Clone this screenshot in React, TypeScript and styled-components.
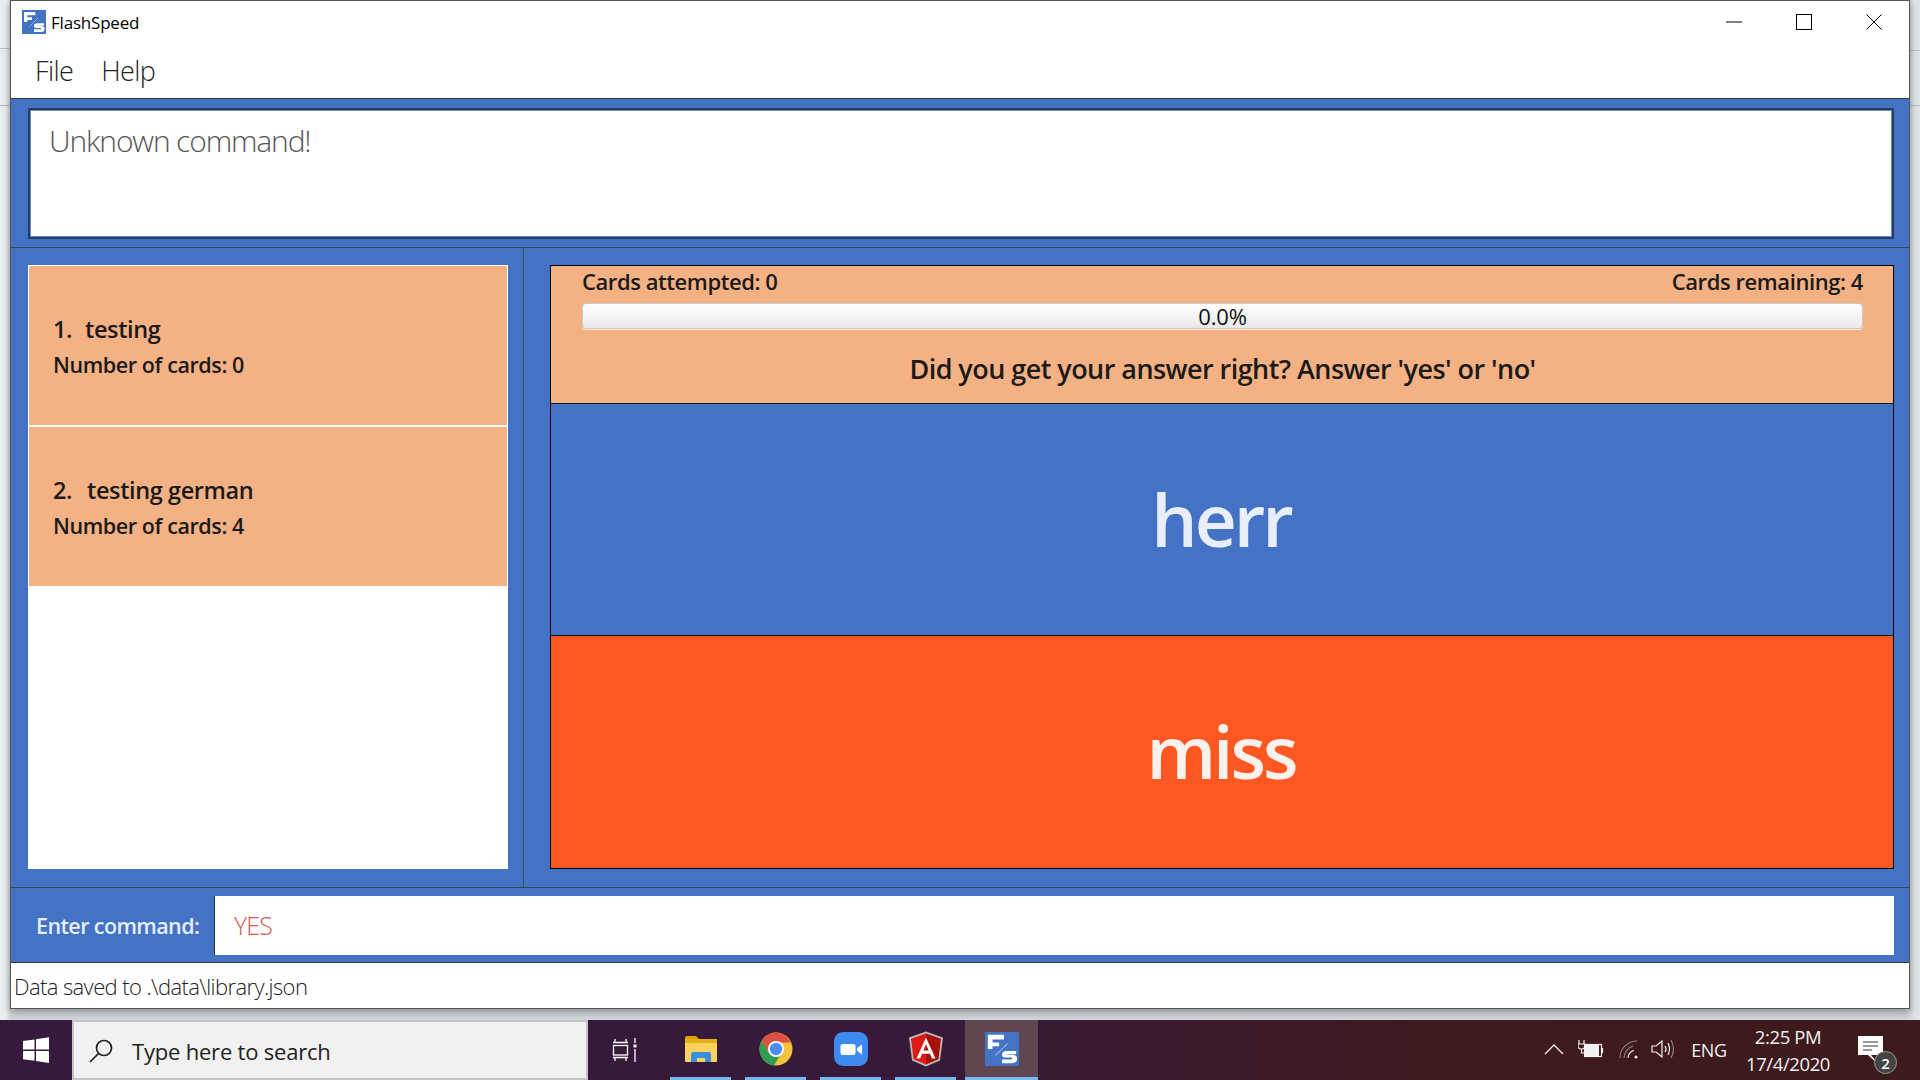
import React from "react";
import styled, { createGlobalStyle } from "styled-components";

const Global = createGlobalStyle`
  html, body { margin: 0; padding: 0; width: 1920px; height: 1080px; overflow: hidden; }
  * { box-sizing: border-box; }
  body { font-family: "Open Sans", "Noto Sans", sans-serif; }
`;

const Page = styled.div`
  width: 1920px; height: 1080px;
  display: flex; flex-direction: column;
`;
const Desktop = styled.div`
  height: 1020px; padding: 0 10px 11px 10px;
  background:
    linear-gradient(#b9bcc0, #b9bcc0) 0 105px / 100% 1px no-repeat,
    linear-gradient(#b9bcc0, #b9bcc0) 0 48px / 10px 1px no-repeat,
    linear-gradient(#b9bcc0, #b9bcc0) 1910px 50px / 10px 1px no-repeat,
    linear-gradient(90deg, #eceef0 0 6px, #d3d8de 10px, #d3d8de 1910px, #e0e3e7 1914px);
`;
const Win = styled.div`
  height: 100%;
  display: flex; flex-direction: column;
  background: #fff;
  border: 1px solid #555;
  box-shadow: 0 3px 8px rgba(0,0,0,.35);
`;
const TitleBar = styled.div`
  height: 42px; display: flex; align-items: center; padding: 0 0 0 11px; gap: 5px;
  font-size: 17px; color: #000; letter-spacing: -0.2px;
`;
const TitleText = styled.span` flex: 1; `;
const WinButtons = styled.div` display: flex; align-items: center; `;
const WinButton = styled.div`
  width: 70px; height: 42px; display: flex; align-items: center; justify-content: center;
`;
const MenuBar = styled.div`
  height: 56px; display: flex; align-items: center; padding: 0 0 0 24px; gap: 28px;
  font-size: 27px; font-weight: 300; color: #222; letter-spacing: -0.6px;
  border-bottom: 1px solid #333;
`;
const ResultPane = styled.div`
  height: 149px; background: #4472c4; padding: 9px 15px 8px 17px;
  border-bottom: 1px solid #3a3f4a;
`;
const ResultBox = styled.div`
  height: 100%; background: #fff; border: 2px solid #2c3a5c;
  box-shadow: inset 0 0 0 1px #5f8ad8;
  padding: 10px 19px; font-size: 30px; font-weight: 300; color: #555; letter-spacing: -1.15px; line-height: 42px;
`;
const Main = styled.div`
  height: 640px; background: #4472c4; display: flex; border-bottom: 1px solid #3a3f4a;
`;
const ListCol = styled.div`
  width: 513px; padding: 17px 15px 18px 17px; border-right: 1px solid #3f4e70; flex: none;
`;
const ListBox = styled.div`
  height: 100%; background: #fff; padding: 1px; display: flex; flex-direction: column; gap: 2px;
`;
const Card = styled.div`
  height: 159px; background: #f4b183; padding-left: 24px; display: flex; flex-direction: column; justify-content: center; gap: 6px;
  color: #1a1a1a;
`;
const CardTitle = styled.div<{ $gap: number }>`
  font-size: 23.5px; font-weight: 600; letter-spacing: -0.4px; display: flex; gap: ${p => p.$gap}px; line-height: 32px;
`;
const CardSub = styled.div`
  font-size: 21.5px; font-weight: 600; letter-spacing: -0.4px; line-height: 28px;
`;
const StudyCol = styled.div`
  flex: 1; padding: 17px 15px 18px 26px; display: flex;
`;
const StudyBox = styled.div`
  flex: 1; display: flex; flex-direction: column; border: 1px solid #000;
`;
const Progress = styled.div`
  height: 137px; background: #f4b183; padding: 0 30px 0 31px; color: #1a1a1a; display: flex; flex-direction: column;
`;
const Counts = styled.div`
  display: flex; justify-content: space-between; font-size: 22px; font-weight: 600; letter-spacing: -0.43px; line-height: 30px; height: 37px;
`;
const Bar = styled.div`
  height: 26px; border: 1px solid #c9c9c9; border-radius: 4px;
  background: linear-gradient(#fff, #f2f2f2 60%, #e8e8e8);
  box-shadow: 0 1px 0 #ffe9d8;
  display: flex; align-items: center; justify-content: center; flex: none;
  font-size: 22px; font-weight: 400; color: #111; letter-spacing: -0.2px;
`;
const Prompt = styled.div`
  flex: 1; display: flex; align-items: center; justify-content: center;
  font-size: 27px; font-weight: 600; letter-spacing: -0.55px; padding-top: 5px;
`;
const Face = styled.div<{ $bg: string; $color: string; $h: number }>`
  height: ${p => p.$h}px; background: ${p => p.$bg}; color: ${p => p.$color};
  display: flex; align-items: center; justify-content: center;
  font-size: 73px; font-weight: 600; letter-spacing: -3px; padding: 0 2px 3px 0;
  border-top: 1px solid #111;
`;
const CommandRow = styled.div`
  height: 75px; background: #4472c4; display: flex; align-items: center; padding: 0 15px 0 25px;
  border-bottom: 1px solid #333;
`;
const CommandLabel = styled.div`
  width: 178px; font-size: 21.5px; font-weight: 600; color: #e6eeff; letter-spacing: -0.6px;
`;
const CommandInput = styled.div`
  flex: 1; height: 59px; background: #fff; border-left: 1px solid #333; display: flex; align-items: center; padding: 0 19px;
  font-size: 25px; font-weight: 300; color: #d8584c; letter-spacing: -0.9px;
`;
const StatusBar = styled.div`
  flex: 1; display: flex; align-items: center; padding-left: 3px;
  font-size: 22px; font-weight: 300; color: #222; letter-spacing: -0.6px;
`;

const Taskbar = styled.div`
  height: 60px; display: flex;
  background: linear-gradient(90deg, #351a3e 0%, #371a38 50%, #3f1a1e 75%, #3d1a1c 100%);
`;
const StartBtn = styled.div` width: 72px; display: flex; align-items: center; justify-content: center; `;
const SearchBox = styled.div`
  width: 516px; background: #f1f1f1; border: 2px solid #c4c4c8;
  display: flex; align-items: center; padding: 2px 0 0 14px; gap: 18px;
  font-size: 22px; color: #222; letter-spacing: -0.2px;
`;
const TaskView = styled.div` width: 73px; display: flex; align-items: center; justify-content: center; `;
const Tasks = styled.div` display: flex; margin-left: 2px; `;
const TaskBtn = styled.div<{ $active?: boolean }>`
  width: ${p => p.$active ? 73 : 75}px; margin-left: ${p => p.$active ? 2 : 0}px;
  display: flex; flex-direction: column; align-items: center;
  background: ${p => p.$active ? "#5f4650" : "transparent"};
`;
const TaskIcon = styled.div` flex: 1; display: flex; align-items: center; justify-content: center; padding-top: 1px; `;
const Underline = styled.div<{ $active?: boolean }>`
  height: 3px; width: ${p => p.$active ? "100%" : "61px"}; background: #76b9ed;
`;
const Tray = styled.div`
  margin-left: auto; display: flex; align-items: center; color: #f2f2f2; padding-right: 23px;
`;
const TrayIcon = styled.div<{ $w: number }>`
  width: ${p => p.$w}px; display: flex; align-items: center; justify-content: center; margin-top: -2px;
`;
const Lang = styled.div` font-size: 18px; width: 62px; text-align: center; letter-spacing: -0.3px; `;
const Clock = styled.div`
  width: 92px; font-size: 18.5px; text-align: center; line-height: 27px; letter-spacing: -0.4px; margin-left: 2px;
`;
const Notify = styled.div`
  position: relative; width: 44px; margin-left: 19px; height: 60px; display: flex; align-items: center; justify-content: center; padding-right: 10px;
`;
const Badge = styled.div`
  position: absolute; right: 0; bottom: 6px; width: 23px; height: 23px; border-radius: 50%;
  background: #444; border: 1px solid #999; color: #fff; font-size: 15px; font-weight: 600;
  display: flex; align-items: center; justify-content: center;
`;

const FsLogo = ({ size }: { size: number }) => (
  <svg width={size} height={size} viewBox="0 0 36 36">
    <rect width="36" height="36" fill="#4472c4" />
    <path d="M3 3H20V8H8V11H15V15H8V18H3Z" fill="#fff" />
    <path d="M11 25 24 12" stroke="#9db8e8" strokeWidth="1.2" />
    <path d="M33 20H23Q18 20 18 24Q18 27 23 27H27Q29 27 29 28Q29 29 27 29H18V33H28Q34 33 34 28Q34 24 28 24H24Q23 24 23 23.5H33Z" fill="#fff" />
  </svg>
);

const WinLogo = () => (
  <svg width="26" height="26" viewBox="0 0 26 26" fill="#fff">
    <path d="M0 4 11.5 2.4V12.4H0zM13 2.2 26 .3V12.4H13zM0 14H11.5V23.8L0 22.2zM13 14H26V26L13 24z" />
  </svg>
);
const SearchIcon = () => (
  <svg width="26" height="26" viewBox="0 0 26 26" fill="none" stroke="#222" strokeWidth="1.7">
    <circle cx="16" cy="10" r="7.5" />
    <path d="M10.5 15.5 2 24" />
  </svg>
);
const TaskViewIcon = () => (
  <svg width="26" height="24" viewBox="0 0 26 24" fill="none" stroke="#fff" strokeWidth="1.3">
    <path d="M1 4.5h15M3 1v3.5M14 1v3.5M1 19.5h15M3 19.5V23M14 19.5V23" />
    <rect x="1.5" y="7.5" width="14" height="9.5" />
    <path d="M23 0v5M23 11v13" />
    <rect x="21.5" y="6.5" width="3" height="3" fill="#fff" stroke="none" />
  </svg>
);
const FolderIcon = () => (
  <svg width="34" height="28" viewBox="0 0 34 28">
    <path d="M1 3q0-2 2-2h9l3 3h-14z" fill="#e0a30f" />
    <rect x="1" y="4" width="32" height="5" fill="#e8ae18" />
    <path d="M1 8h32v18q0 1-1 1H2q-1 0-1-1z" fill="#fbd35c" />
    <path d="M7 27v-8q0-2 2-2h16q2 0 2 2v8h-6v-4h-8v4z" fill="#3a8ee0" />
  </svg>
);
const ChromeIcon = () => (
  <svg width="34" height="34" viewBox="0 0 34 34">
    <circle cx="17" cy="17" r="16.5" fill="#f5c33b" />
    <path d="M17 .5A16.5 16.5 0 0 0 2.7 8.7L10 21 17 10.5h14.4A16.5 16.5 0 0 0 17 .5z" fill="#dd5144" />
    <path d="M2.7 8.7A16.5 16.5 0 0 0 15 33.4L21.8 22 10 21z" fill="#2f9e52" />
    <circle cx="17" cy="17" r="8" fill="#fff" />
    <circle cx="17" cy="17" r="6.2" fill="#4d8cf0" />
  </svg>
);
const ZoomIcon = () => (
  <svg width="34" height="34" viewBox="0 0 34 34">
    <rect width="34" height="34" rx="9" fill="#3d8af0" />
    <rect x="6.5" y="12" width="15" height="11" rx="2.5" fill="#fff" />
    <path d="M23 16.2 28 12.5v10L23 18.8z" fill="#fff" />
  </svg>
);
const AngularIcon = () => (
  <svg width="36" height="36" viewBox="0 0 36 36">
    <path d="M18 .5 1 6.5l3 23L18 35.5l14-6 3-23z" fill="#b9b9b9" />
    <path d="M18 2.5 3 7.7l2.6 20.6L18 33.5z" fill="#dd1b16" />
    <path d="M18 2.5 33 7.7l-2.6 20.6L18 33.5z" fill="#a8100c" />
    <path d="M18 6.5 8.5 27.5h3.6l1.9-4.8h8l1.9 4.8h3.6zM15.3 19.6 18 13.2l2.7 6.4z" fill="#fff" />
  </svg>
);
const Chevron = () => (
  <svg width="20" height="12" viewBox="0 0 20 12" fill="none" stroke="#f2f2f2" strokeWidth="1.3"><path d="M1 11 10 2l9 9" /></svg>
);
const Battery = () => (
  <svg width="26" height="20" viewBox="0 0 26 20" fill="none" stroke="#f2f2f2" strokeWidth="1.2">
    <path d="M1 1v4M6 1v4M0 5h7v2q0 3-3.5 3T0 7zM3.5 10v4h3" />
    <rect x="6.5" y="5.5" width="17" height="12" />
    <rect x="7" y="6" width="14" height="11" fill="#f2f2f2" stroke="none" />
    <path d="M24.5 9v5" />
  </svg>
);
const Wifi = () => (
  <svg width="20" height="20" viewBox="0 0 20 20" fill="none" stroke="#8d8080" strokeWidth="1.1">
    <path d="M1 19A17 17 0 0 1 18 2" />
    <path d="M5 19A13 13 0 0 1 14 7" />
    <path d="M9 19a8 8 0 0 1 6-7.5" stroke="#f2f2f2" />
    <circle cx="17" cy="18" r="1.5" fill="#f2f2f2" stroke="none" />
  </svg>
);
const Volume = () => (
  <svg width="24" height="20" viewBox="0 0 24 20" fill="none" stroke="#f2f2f2" strokeWidth="1.2">
    <path d="M1 7v6h4l6 5V2L5 7z" />
    <path d="M14 7q2 3 0 6" />
    <path d="M17 4q3 6 0 12" />
    <path d="M20 1q5 9 0 18" stroke="#8d8080" />
  </svg>
);
const Message = () => (
  <svg width="25" height="29" viewBox="0 0 25 29">
    <path d="M0 0h25v19H14l-1 0 8 10-11-10H0z" fill="#fff" />
    <path d="M5 6h15M5 10h15M5 14h9" stroke="#333" strokeWidth="1" />
  </svg>
);

export default function App() {
  return (
    <Page>
      <Global />
      <Desktop>
        <Win>
          <TitleBar>
            <FsLogo size={24} />
            <TitleText>FlashSpeed</TitleText>
            <WinButtons>
              <WinButton>
                <svg width="16" height="16" viewBox="0 0 16 16"><path d="M0 8h16" stroke="#000" /></svg>
              </WinButton>
              <WinButton>
                <svg width="16" height="16" viewBox="0 0 16 16"><rect x=".5" y=".5" width="15" height="15" fill="none" stroke="#000" /></svg>
              </WinButton>
              <WinButton>
                <svg width="16" height="16" viewBox="0 0 16 16"><path d="M.5.5l15 15M15.5.5l-15 15" stroke="#000" /></svg>
              </WinButton>
            </WinButtons>
          </TitleBar>
          <MenuBar><span>File</span><span>Help</span></MenuBar>
          <ResultPane><ResultBox>Unknown command!</ResultBox></ResultPane>
          <Main>
            <ListCol>
              <ListBox>
                <Card>
                  <CardTitle $gap={13}><span>1.</span><span>testing</span></CardTitle>
                  <CardSub>Number of cards: 0</CardSub>
                </Card>
                <Card>
                  <CardTitle $gap={15}><span>2.</span><span>testing german</span></CardTitle>
                  <CardSub>Number of cards: 4</CardSub>
                </Card>
              </ListBox>
            </ListCol>
            <StudyCol>
              <StudyBox>
                <Progress>
                  <Counts><span>Cards attempted: 0</span><span>Cards remaining: 4</span></Counts>
                  <Bar>0.0%</Bar>
                  <Prompt>Did you get your answer right? Answer 'yes' or 'no'</Prompt>
                </Progress>
                <Face $bg="#4472c4" $color="#e8eefb" $h={233}>herr</Face>
                <Face $bg="#ff5722" $color="#fff2ec" $h={233}>miss</Face>
              </StudyBox>
            </StudyCol>
          </Main>
          <CommandRow>
            <CommandLabel>Enter command:</CommandLabel>
            <CommandInput>YES</CommandInput>
          </CommandRow>
          <StatusBar>Data saved to .\data\library.json</StatusBar>
        </Win>
      </Desktop>
      <Taskbar>
        <StartBtn><WinLogo /></StartBtn>
        <SearchBox><SearchIcon /><span>Type here to search</span></SearchBox>
        <TaskView><TaskViewIcon /></TaskView>
        <Tasks>
          <TaskBtn><TaskIcon><FolderIcon /></TaskIcon><Underline /></TaskBtn>
          <TaskBtn><TaskIcon><ChromeIcon /></TaskIcon><Underline /></TaskBtn>
          <TaskBtn><TaskIcon><ZoomIcon /></TaskIcon><Underline /></TaskBtn>
          <TaskBtn><TaskIcon><AngularIcon /></TaskIcon><Underline /></TaskBtn>
          <TaskBtn $active><TaskIcon><FsLogo size={34} /></TaskIcon><Underline $active /></TaskBtn>
        </Tasks>
        <Tray>
          <TrayIcon $w={36}><Chevron /></TrayIcon>
          <TrayIcon $w={38}><Battery /></TrayIcon>
          <TrayIcon $w={38}><Wifi /></TrayIcon>
          <TrayIcon $w={30}><Volume /></TrayIcon>
          <Lang>ENG</Lang>
          <Clock>2:25 PM<br />17/4/2020</Clock>
          <Notify><Message /><Badge>2</Badge></Notify>
        </Tray>
      </Taskbar>
    </Page>
  );
}
